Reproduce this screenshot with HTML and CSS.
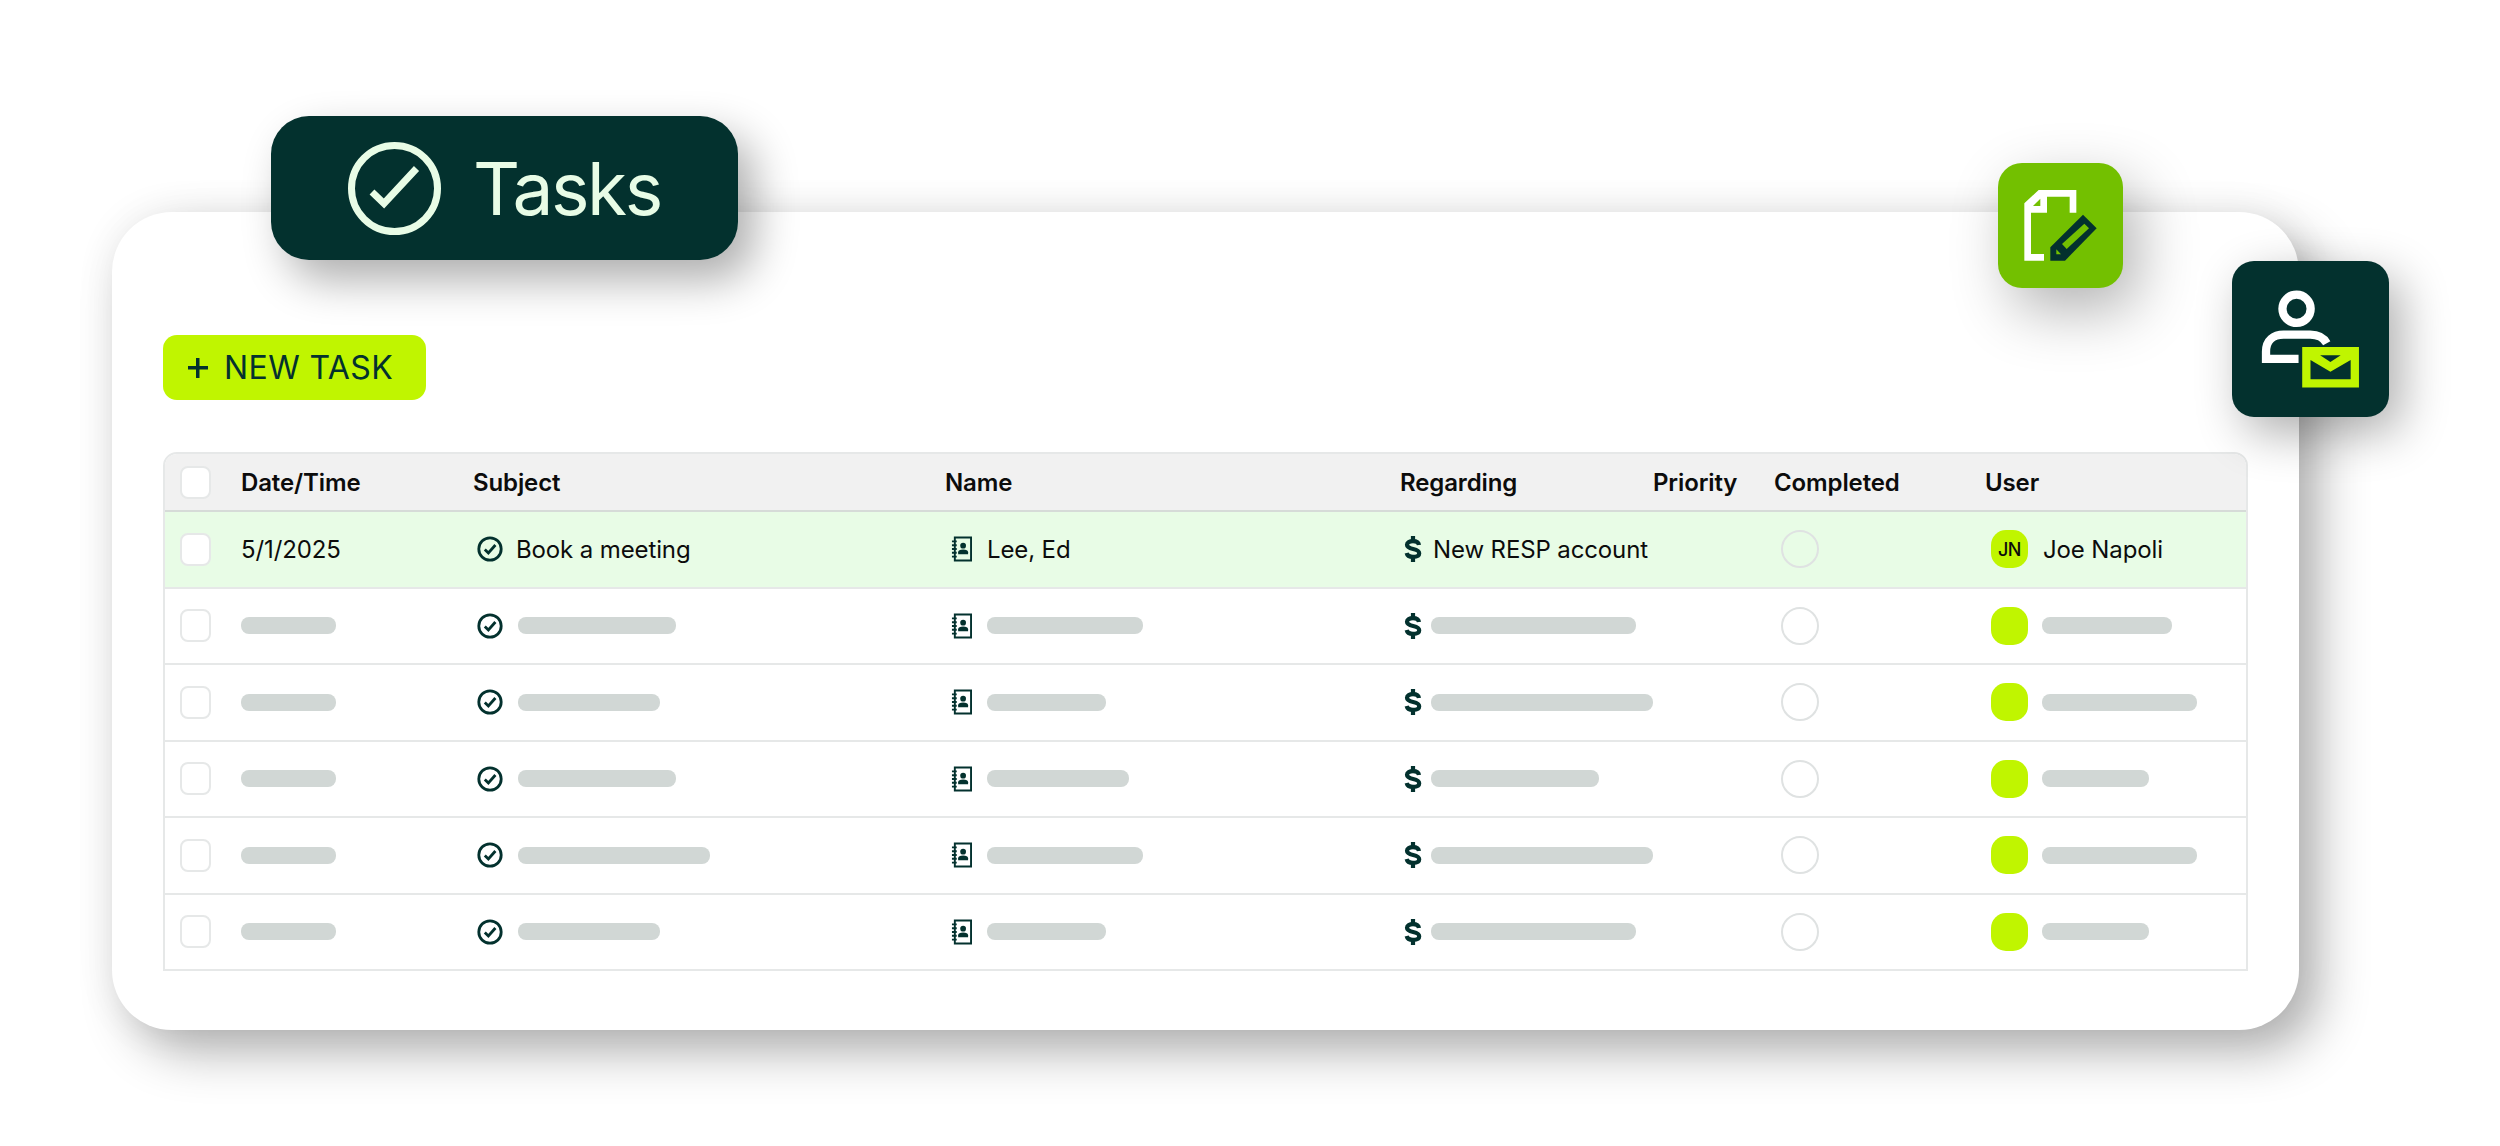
FILE: index.html
```html
<!DOCTYPE html>
<html lang="en">
<head>
<meta charset="utf-8">
<title>Tasks</title>
<link rel="stylesheet" href="styles.css">
</head>
<body>
<svg class="defs" width="0" height="0" aria-hidden="true">
  <symbol id="i-check" viewBox="0 0 26 26">
    <circle cx="13" cy="13" r="11.200" fill="none" stroke="#03312e" stroke-width="2.800"/>
    <path d="M7.800 13.400l3.600 3.600 7-8" fill="none" stroke="#03312e" stroke-width="2.800"/>
  </symbol>
  <symbol id="i-book" viewBox="0 0 22 26">
    <path d="M4 1h17v24H4z" fill="none" stroke="#03312e" stroke-width="2"/>
    <path d="M1 5h5M1 9h5M1 13h5M1 17h5M1 21h5" stroke="#03312e" stroke-width="2"/>
    <circle cx="12.700" cy="9.500" r="3" fill="#03312e"/>
    <path d="M7.500 18.500v-2c0-2 2-3 5.200-3s5.200 1 5.200 3v2z" fill="#03312e"/>
  </symbol>
  <symbol id="i-dollar" viewBox="0 0 18 26">
    <path d="M15 9C14.600 6.400 12.400 5.200 9 5.200 5.500 5.200 3 6.400 3 8.800c0 5.600 12.200 2.800 12.200 8.400 0 2.400-2.700 3.600-6.200 3.600-3.500 0-5.800-1.200-6.300-3.800" fill="none" stroke="#03312e" stroke-width="4.200"/>
    <path d="M9 0v5M9 21v5" stroke="#03312e" stroke-width="4.200"/>
  </symbol>
</svg>

<main class="card">
  <div class="badge">
    <svg class="badge-icon" viewBox="0 0 93 93" aria-hidden="true">
      <circle cx="46.500" cy="46.500" r="43" fill="none" stroke="#e8fce6" stroke-width="7"/>
      <path d="M24 50L36 61.500L68.500 26.500" fill="none" stroke="#e8fce6" stroke-width="7"/>
    </svg>
    <span class="badge-text">Tasks</span>
  </div>

  <div class="tile tile-green">
    <svg viewBox="143 69 375 375" aria-hidden="true">
      <path d="M222 190L265 150H378V218H358V170H290V218H242V342H281V362H222Z" fill="#fff"/>
      <path d="M248 198L270 176V198Z" fill="#73c000"/>
      <path d="M300 322L398 224L439 265L344 362H300Z" fill="#03312e"/>
      <path d="M335 312L402 251L416 265L349 327Z" fill="#73c000"/>
      <path d="M318 328L332 343H318Z" fill="#73c000"/>
    </svg>
  </div>

  <div class="tile tile-dark">
    <svg viewBox="846 362 470 470" aria-hidden="true">
      <circle cx="1039" cy="506" r="42.500" fill="none" stroke="#fff" stroke-width="25"/>
      <path d="M1045 657H947V635C947 600 970 584 1000 584H1080C1105 584 1120 592 1130 610" fill="none" stroke="#fff" stroke-width="25"/>
      <path d="M1056 621H1227V743H1056Z" fill="#c0f500"/>
      <path d="M1081 660L1141 696L1202 660V718H1081Z" fill="#03312e"/>
      <path d="M1110 646H1172L1141 666Z" fill="#03312e"/>
    </svg>
  </div>

  <button class="new-task" type="button"><span class="plus"></span>NEW TASK</button>

  <div class="table">
    <div class="row head">
      <div class="cell"><span class="box"></span></div>
      <div class="cell">Date/Time</div>
      <div class="cell">Subject</div>
      <div class="cell">Name</div>
      <div class="cell">Regarding</div>
      <div class="cell">Priority</div>
      <div class="cell">Completed</div>
      <div class="cell">User</div>
    </div>

    <div class="row active">
      <div class="cell"><span class="box"></span></div>
      <div class="cell">5/1/2025</div>
      <div class="cell ind-subj"><svg class="ic ic-check"><use href="#i-check"/></svg><span class="val-subj">Book a meeting</span></div>
      <div class="cell ind-name"><svg class="ic ic-book"><use href="#i-book"/></svg><span class="val-name">Lee, Ed</span></div>
      <div class="cell ind-reg"><svg class="ic ic-dollar"><use href="#i-dollar"/></svg><span class="val-reg">New RESP account</span></div>
      <div class="cell"></div>
      <div class="cell ind-done"><span class="radio"></span></div>
      <div class="cell ind-user"><span class="avatar">JN</span><span class="val-user">Joe Napoli</span></div>
    </div>

    <div class="row">
      <div class="cell"><span class="box"></span></div>
      <div class="cell"><span class="bar bar-date"></span></div>
      <div class="cell ind-subj"><svg class="ic ic-check"><use href="#i-check"/></svg><span class="bar bar-subj" style="width:158px"></span></div>
      <div class="cell ind-name"><svg class="ic ic-book"><use href="#i-book"/></svg><span class="bar bar-name" style="width:156px"></span></div>
      <div class="cell ind-reg"><svg class="ic ic-dollar"><use href="#i-dollar"/></svg><span class="bar bar-reg" style="width:205px"></span></div>
      <div class="cell"></div>
      <div class="cell ind-done"><span class="radio"></span></div>
      <div class="cell ind-user"><span class="avatar"></span><span class="bar bar-user" style="width:130px"></span></div>
    </div>

    <div class="row">
      <div class="cell"><span class="box"></span></div>
      <div class="cell"><span class="bar bar-date"></span></div>
      <div class="cell ind-subj"><svg class="ic ic-check"><use href="#i-check"/></svg><span class="bar bar-subj" style="width:142px"></span></div>
      <div class="cell ind-name"><svg class="ic ic-book"><use href="#i-book"/></svg><span class="bar bar-name" style="width:119px"></span></div>
      <div class="cell ind-reg"><svg class="ic ic-dollar"><use href="#i-dollar"/></svg><span class="bar bar-reg" style="width:225px"></span></div>
      <div class="cell"></div>
      <div class="cell ind-done"><span class="radio"></span></div>
      <div class="cell ind-user"><span class="avatar"></span><span class="bar bar-user" style="width:155px"></span></div>
    </div>

    <div class="row">
      <div class="cell"><span class="box"></span></div>
      <div class="cell"><span class="bar bar-date"></span></div>
      <div class="cell ind-subj"><svg class="ic ic-check"><use href="#i-check"/></svg><span class="bar bar-subj" style="width:158px"></span></div>
      <div class="cell ind-name"><svg class="ic ic-book"><use href="#i-book"/></svg><span class="bar bar-name" style="width:142px"></span></div>
      <div class="cell ind-reg"><svg class="ic ic-dollar"><use href="#i-dollar"/></svg><span class="bar bar-reg" style="width:168px"></span></div>
      <div class="cell"></div>
      <div class="cell ind-done"><span class="radio"></span></div>
      <div class="cell ind-user"><span class="avatar"></span><span class="bar bar-user" style="width:107px"></span></div>
    </div>

    <div class="row">
      <div class="cell"><span class="box"></span></div>
      <div class="cell"><span class="bar bar-date"></span></div>
      <div class="cell ind-subj"><svg class="ic ic-check"><use href="#i-check"/></svg><span class="bar bar-subj" style="width:192px"></span></div>
      <div class="cell ind-name"><svg class="ic ic-book"><use href="#i-book"/></svg><span class="bar bar-name" style="width:156px"></span></div>
      <div class="cell ind-reg"><svg class="ic ic-dollar"><use href="#i-dollar"/></svg><span class="bar bar-reg" style="width:225px"></span></div>
      <div class="cell"></div>
      <div class="cell ind-done"><span class="radio"></span></div>
      <div class="cell ind-user"><span class="avatar"></span><span class="bar bar-user" style="width:155px"></span></div>
    </div>

    <div class="row">
      <div class="cell"><span class="box"></span></div>
      <div class="cell"><span class="bar bar-date"></span></div>
      <div class="cell ind-subj"><svg class="ic ic-check"><use href="#i-check"/></svg><span class="bar bar-subj" style="width:142px"></span></div>
      <div class="cell ind-name"><svg class="ic ic-book"><use href="#i-book"/></svg><span class="bar bar-name" style="width:119px"></span></div>
      <div class="cell ind-reg"><svg class="ic ic-dollar"><use href="#i-dollar"/></svg><span class="bar bar-reg" style="width:205px"></span></div>
      <div class="cell"></div>
      <div class="cell ind-done"><span class="radio"></span></div>
      <div class="cell ind-user"><span class="avatar"></span><span class="bar bar-user" style="width:107px"></span></div>
    </div>
  </div>
</main>
</body>
</html>
```

FILE: styles.css
```css
* { box-sizing: border-box; }

html, body {
  margin: 0;
  background: #fff;
}

body {
  width: 2500px;
  height: 1146px;
  overflow: hidden;
  padding: 212px 0 0 112px;
  font-family: "Inter", "Liberation Sans", sans-serif;
  color: #0c0c0c;
}

.defs { position: absolute; }

.card {
  position: relative;
  width: 2187px;
  height: 818px;
  padding: 123px 51px 0;
  background: #fff;
  border-radius: 60px;
  box-shadow: 20px 22px 50px rgba(0, 0, 0, .3), 0 0 44px rgba(0, 0, 0, .06);
}

.badge {
  position: absolute;
  left: 159px;
  top: -96px;
  width: 467px;
  height: 144px;
  padding-left: 77px;
  display: flex;
  align-items: center;
  gap: 32px;
  background: #03312e;
  border-radius: 38px;
  box-shadow: 16px 20px 44px rgba(0, 0, 0, .32);
}

.badge-icon {
  width: 93px;
  height: 93px;
  flex: none;
}

.badge-text {
  font-size: 73px;
  line-height: 1;
  color: #e8fce6;
  letter-spacing: -2.400px;
}

.tile {
  position: absolute;
  display: block;
}

.tile svg {
  display: block;
  width: 100%;
  height: 100%;
}

.tile-green {
  left: 1886px;
  top: -49px;
  width: 125px;
  height: 125px;
  background: #73c000;
  border-radius: 24px;
  box-shadow: 14px 22px 60px rgba(0, 0, 0, .3);
}

.tile-dark {
  left: 2120px;
  top: 49px;
  width: 157px;
  height: 156px;
  background: #03312e;
  border-radius: 22px;
  box-shadow: 12px 16px 48px rgba(0, 0, 0, .32);
}

.new-task {
  display: flex;
  align-items: center;
  width: 263px;
  height: 65px;
  padding: 0 0 0 25px;
  gap: 16px;
  border: 0;
  border-radius: 14px;
  background: #c0f500;
  color: #03312e;
  font-family: inherit;
  font-size: 32px;
  letter-spacing: .4px;
}

.plus {
  width: 20px;
  height: 20px;
  flex: none;
  background:
    linear-gradient(#03312e, #03312e) center / 100% 3.500px no-repeat,
    linear-gradient(#03312e, #03312e) center / 3.500px 100% no-repeat;
}

.table {
  margin-top: 52px;
  width: 2085px;
  border: 2px solid #e6e8e8;
  border-radius: 14px 14px 0 0;
  overflow: hidden;
}

.row {
  display: grid;
  grid-template-columns: 76px 232px 472px 455px 253px 121px 211px 1fr;
  align-items: center;
  height: 76.500px;
  border-top: 2px solid #e6e8e8;
  font-size: 24px;
  letter-spacing: -.12px;
  background: #fff;
}

.row.head {
  height: 56px;
  border-top: 0;
  background: #f1f1f1;
  font-weight: 600;
}

.row.active {
  background: #e8fce6;
  border-top-color: #d6dbd8;
}

.cell {
  display: flex;
  align-items: center;
  min-width: 0;
  white-space: nowrap;
}

.box {
  display: block;
  width: 31px;
  height: 33px;
  margin-left: 15px;
  background: #fff;
  border: 2px solid #e6e8e8;
  border-radius: 8px;
}

.bar {
  display: block;
  height: 17px;
  border-radius: 8px;
  background: #d1d7d5;
}

.bar-date { width: 95px; }
.bar-subj { margin-left: 1px; }
.bar-reg { margin-left: 0; }
.bar-user { margin-left: 1px; }

.ic { flex: none; display: block; }

.ind-subj { padding-left: 4px; }
.ic-check { width: 26px; height: 26px; margin-right: 14px; }

.ind-name { padding-left: 6px; }
.ic-book { width: 21px; height: 26px; margin-right: 15px; }

.ind-reg { padding-left: 4px; }
.ic-dollar { width: 18px; height: 26px; margin-right: 9px; }

.val-subj, .val-name, .val-reg, .val-user { display: block; }
.val-subj { margin-left: -1px; }
.val-reg { margin-left: 2px; }
.val-user { margin-left: 2px; }

.ind-done { padding-left: 7px; }

.radio {
  display: block;
  width: 38px;
  height: 38px;
  border: 2px solid #dfe2e2;
  border-radius: 50%;
}

.ind-user { padding-left: 6px; }

.avatar {
  display: flex;
  align-items: center;
  justify-content: center;
  flex: none;
  width: 37px;
  height: 38px;
  margin-right: 13px;
  border-radius: 15px;
  background: #c0f500;
  font-size: 18px;
  font-weight: 500;
  letter-spacing: -.5px;
}
```
